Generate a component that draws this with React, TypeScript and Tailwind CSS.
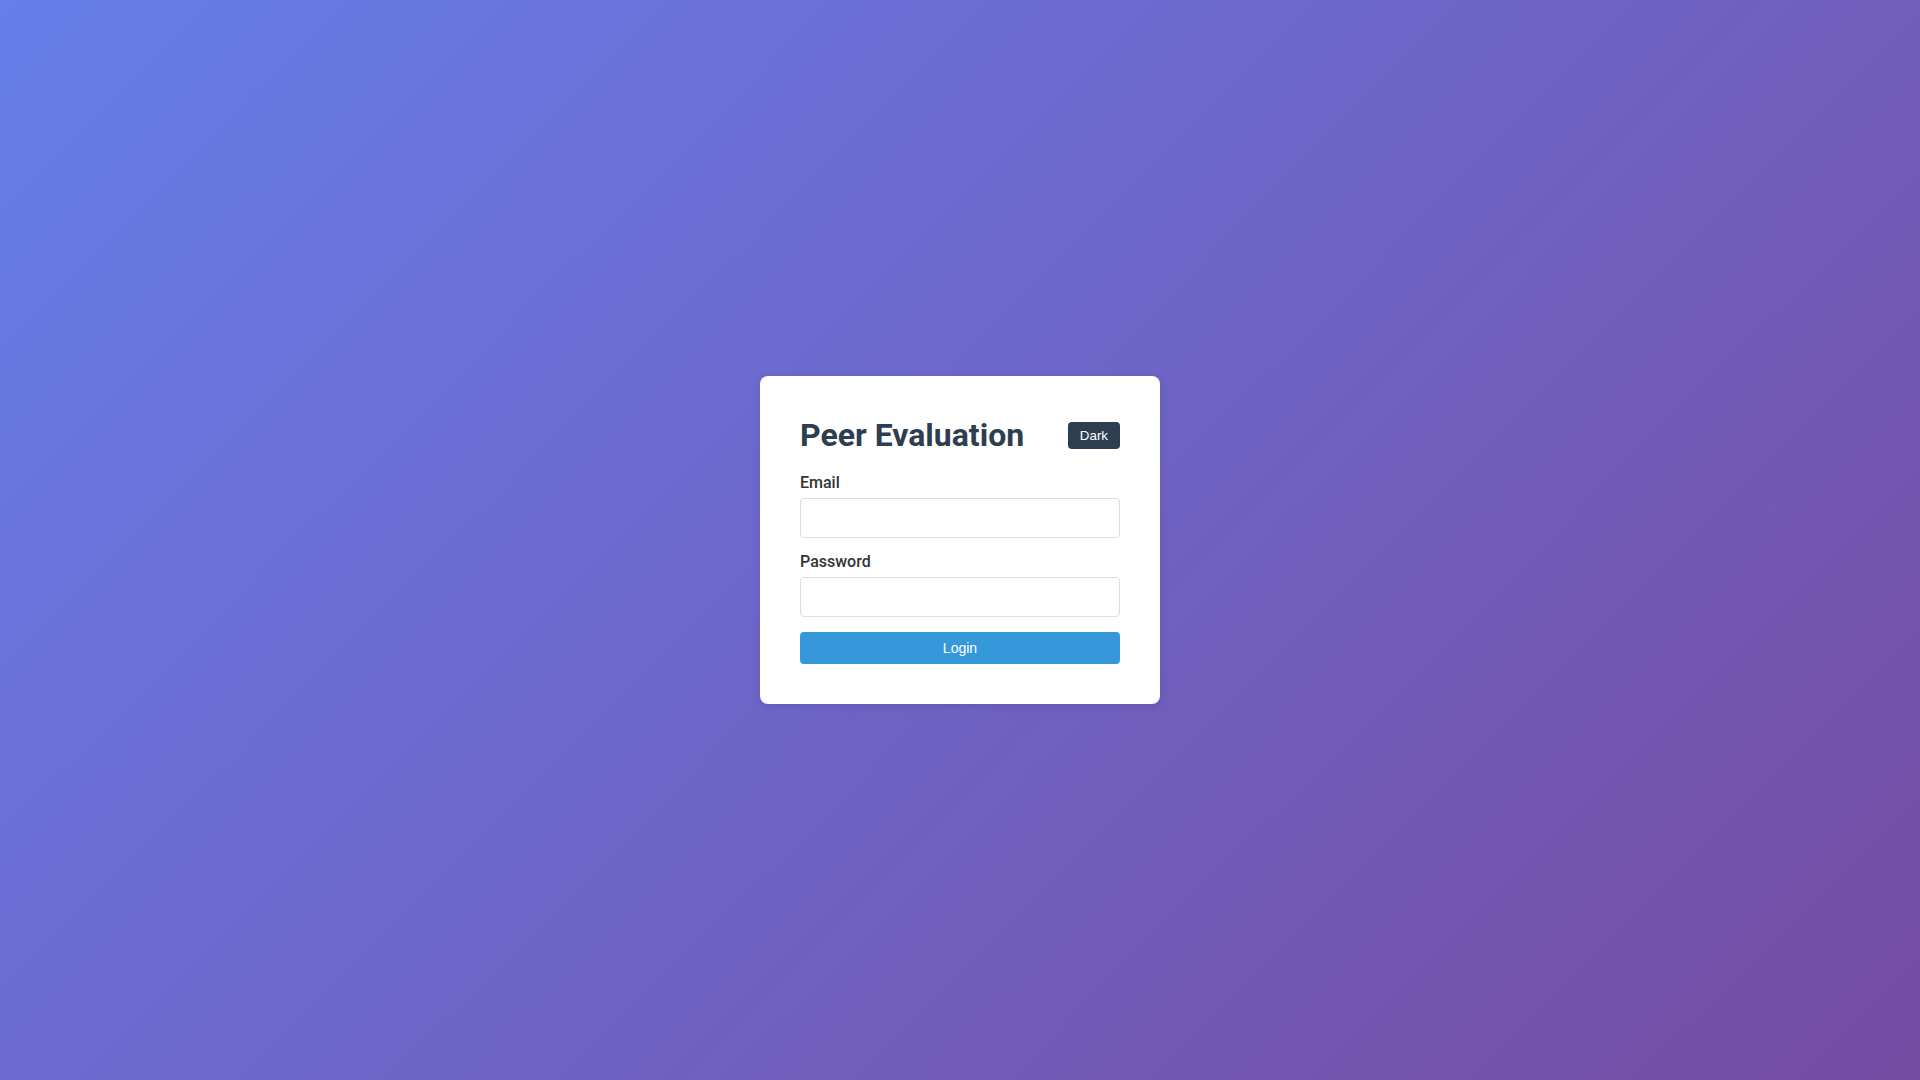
export default function App() {
  return (
    <div className="flex min-h-screen w-full items-center justify-center bg-[linear-gradient(135deg,#667eea_0%,#764ba2_100%)] font-['Roboto',sans-serif]">
      <div className="flex w-[400px] flex-col rounded-lg bg-white p-10 shadow-[0_2px_10px_rgba(0,0,0,0.1)]">
        {/* Header */}
        <div className="mb-5 flex items-center justify-between">
          <h1 className="text-[32px] leading-[1.2] font-bold text-[#2c3e50]">
            Peer Evaluation
          </h1>
          <button className="cursor-pointer rounded bg-[#2c3e50] px-3 py-1.5 font-['Liberation_Sans',Arial,sans-serif] text-[13.33px] leading-[15px] text-white">
            Dark
          </button>
        </div>

        {/* Form */}
        <form className="flex flex-col" onSubmit={(e) => e.preventDefault()}>
          <div className="mb-[15px] flex flex-col">
            <label className="mb-[5px] text-base leading-[1.172] font-medium text-[#333]">
              Email
            </label>
            <input
              type="email"
              className="h-10 w-full rounded border border-[#ddd] px-2.5 text-base outline-none"
            />
          </div>
          <div className="mb-[15px] flex flex-col">
            <label className="mb-[5px] text-base leading-[1.172] font-medium text-[#333]">
              Password
            </label>
            <input
              type="password"
              className="h-10 w-full rounded border border-[#ddd] px-2.5 text-base outline-none"
            />
          </div>
          <button
            type="submit"
            className="h-8 w-full cursor-pointer rounded bg-[#3498db] font-['Liberation_Sans',Arial,sans-serif] text-sm text-white"
          >
            Login
          </button>
        </form>
      </div>
    </div>
  );
}
